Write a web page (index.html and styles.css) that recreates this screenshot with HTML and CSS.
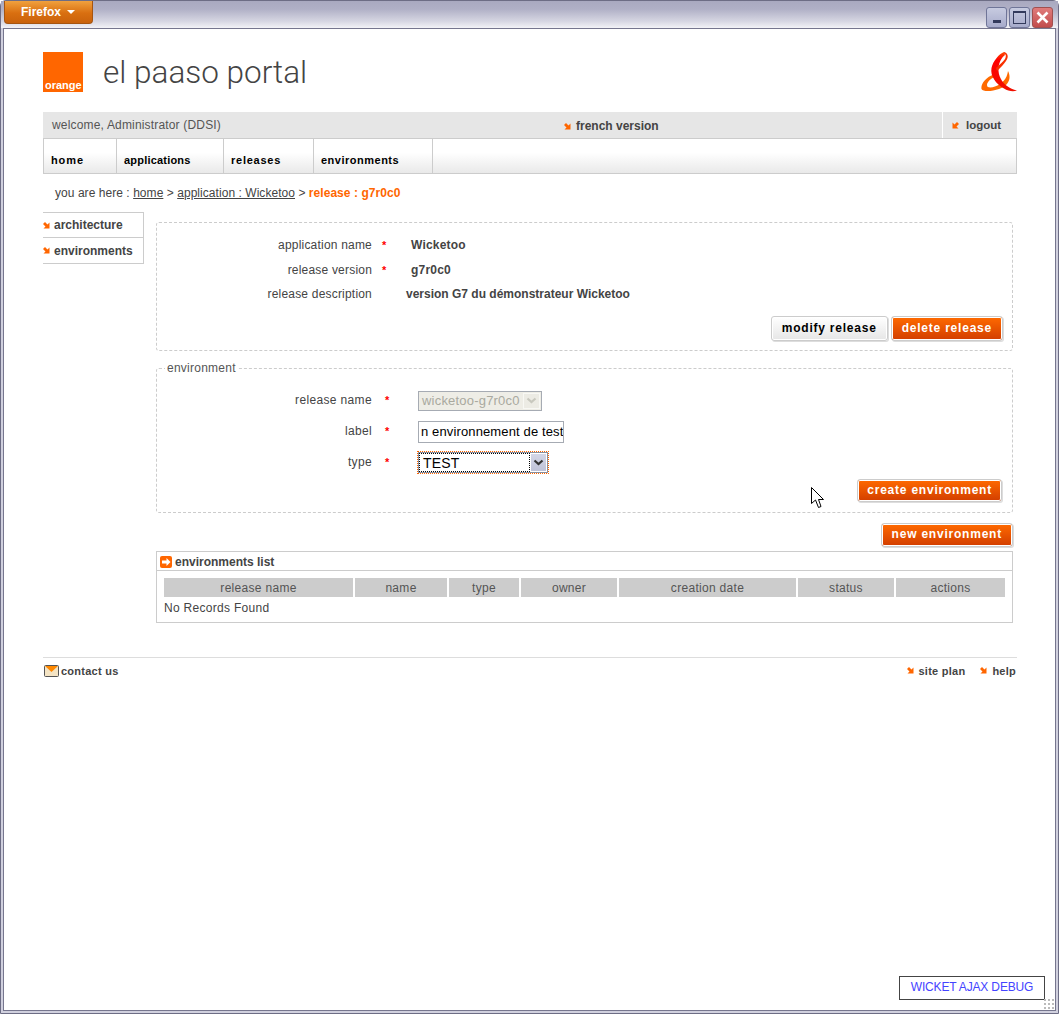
FILE: index.html
```html
<!doctype html>
<html>
<head>
<meta charset="utf-8">
<title>el paaso portal</title>
<link rel="stylesheet" href="styles.css">
</head>

<body>
<svg class="defs" width="0" height="0">
	<symbol id="arr" viewBox="0 0 7 7"><path d="M6.5 0.5V6.500H0.5L2.5 4.500 0 2 2 0 4.500 2.500Z" fill="#f60"/></symbol>
	<symbol id="arr2" viewBox="0 0 7 7"><path d="M0.5 0.5V6.500H6.500L4.500 4.500 7 2 5 0 2.500 2.500Z" fill="#f60"/></symbol>
</svg>
<div class="window">
	<div class="titlebar">
		<div class="ffbtn">Firefox <i class="ffarrow"></i></div>
		<div class="winbtns">
			<span class="winbtn"><i class="icmin"></i></span>
			<span class="winbtn"><i class="icmax"></i></span>
			<span class="winbtn close">
				<svg width="15" height="15" viewBox="0 0 15 15"><path d="M2.5 2.5 12.5 12.5M12.5 2.5 2.5 12.5" stroke="#fff" stroke-width="2.6" fill="none"/></svg>
			</span>
		</div>
	</div>
	<div class="content">
		<div class="header">
			<div class="logo"><span>orange</span></div>
			<div class="sitename">el paaso portal</div>
			<svg class="amp" width="36" height="40" viewBox="0 0 36 40">
				<defs>
					<linearGradient id="g1" x1="0" y1="0" x2="0" y2="1"><stop offset="0" stop-color="#ff5000"/><stop offset="0.2" stop-color="#f00"/><stop offset="1" stop-color="#f01000"/></linearGradient>
				</defs>
				<path d="M27 19C31 27 27 34 18 37 11 39.5 2 40 0.5 37-0.5 32 5 25 13 22.5L14 25C10 26 6 30 6 33 6 36 10 36 14 34.5 21 32 26 27 27 19Z" fill="#ff6a00"/>
				<path d="M23 0C18 2 12 9 10.5 16 9 24 15 32 23 36.5 27 39 32 40 36 38.5 32 37.5 29 36 26 34 21 30 17 24 17.5 16 18 10 21 5 24 3Z" fill="url(#g1)"/>
				<path d="M23 0C27 1 28 5 25 9 23 12 20 15 16 19L15 16C18 13 22 10 24 7 25.5 4 25 2 23 1.5Z" fill="#f83000"/>
			</svg>
		</div>

		<div class="topbar">
			<div class="welcome">welcome, Administrator (DDSI)</div>
			<a class="french"><svg class="arr"><use href="#arr"/></svg>french version</a>
			<a class="logout"><svg class="arr"><use href="#arr2"/></svg>logout</a>
		</div>
		<ul class="nav">
			<li class="n1">home</li>
			<li class="n2">applications</li>
			<li class="n3">releases</li>
			<li class="n4">environments</li>
		</ul>
		<div class="crumb">you are here : <a>home</a> &gt; <a>application : Wicketoo</a> &gt; <b>release : g7r0c0</b></div>

		<div class="columns">
			<ul class="side">
				<li><svg class="arr"><use href="#arr"/></svg>architecture</li>
				<li><svg class="arr"><use href="#arr"/></svg>environments</li>
			</ul>
			<div class="main">
				<div class="panel info">
					<div class="inforow"><label>application name</label><em>*</em><b class="v1">Wicketoo</b></div>
					<div class="inforow"><label>release version</label><em>*</em><b class="v1">g7r0c0</b></div>
					<div class="inforow"><label>release description</label><em></em><b class="v2">version G7 du démonstrateur Wicketoo</b></div>
					<div class="btnrow">
						<span class="btn white">modify release</span>
						<span class="btn">delete release</span>
					</div>
				</div>

				<fieldset class="panel envform">
					<legend>environment</legend>
					<div class="formrow"><label>release name</label><em>*</em>
						<div class="sel disabled">wicketoo-g7r0c0<span class="selarrow"><svg width="11" height="7" viewBox="0 0 11 7"><path d="M1.5 1.5 5.5 5 9.5 1.5" stroke="#c8c8be" stroke-width="2.2" fill="none"/></svg></span></div>
					</div>
					<div class="formrow"><label>label</label><em>*</em>
						<input class="txt" type="text" value="n environnement de test">
					</div>
					<div class="formrow"><label>type</label><em>*</em>
						<div class="sel focus"><span class="seltext">TEST</span><span class="selarrow"><svg width="11" height="7" viewBox="0 0 11 7"><path d="M1.5 1.5 5.5 5 9.5 1.5" stroke="#333" stroke-width="2.2" fill="none"/></svg></span></div>
					</div>
					<div class="btnrow create"><span class="btn">create environment</span></div>
				</fieldset>

				<div class="newrow"><span class="btn">new environment</span></div>

				<div class="listbox">
					<div class="listhead">
						<svg width="12" height="12" viewBox="0 0 12 12"><rect width="12" height="12" rx="2" fill="#f60"/><path d="M6.5 2 10.5 6 6.5 10V7.500H2V4.500H6.500Z" fill="#fff"/></svg>
						environments list
					</div>
					<table class="list">
						<tr>
							<th class="c1">release name</th>
							<th class="c2">name</th>
							<th class="c3">type</th>
							<th class="c4">owner</th>
							<th class="c5">creation date</th>
							<th class="c6">status</th>
							<th class="c7">actions</th>
						</tr>
						<tr><td colspan="7">No Records Found</td></tr>
					</table>
				</div>
			</div>
		</div>

		<div class="footer">
			<a class="contact">
				<svg width="15" height="12" viewBox="0 0 15 12"><rect x="0.5" y="0.5" width="14" height="11" rx="1" fill="#f4e4c4" stroke="#555"/><path d="M1 1H14L7.5 7Z" fill="#f80"/></svg>
				contact us
			</a>
			<a class="plan"><svg class="arr"><use href="#arr"/></svg>site plan</a>
			<a class="help"><svg class="arr"><use href="#arr"/></svg>help</a>
		</div>

		<svg class="cursor" width="13" height="22" viewBox="0 0 13 22"><path d="M0.5 0.5V16.500L4.500 13 7.500 20.500 10 19.500 7.500 12.500H12.500Z" fill="#fff" stroke="#000"/></svg>
		<div class="debug">WICKET AJAX DEBUG</div>
		<div class="grip"></div>
	</div>
</div>
</body>
</html>
```

FILE: styles.css
```css
*{ margin:0; padding:0; list-style:none; box-sizing:border-box;}
html,body{ height:100%; background:#fff;}
body{ font-family:"Liberation Sans",Arial,sans-serif; font-size:12px; color:#444; overflow:hidden;}
a{ color:inherit;}
.defs{ position:absolute;}
.arr{ width:7px; height:7px; margin-right:5px; flex:none;}

/* window frame */
.window{ width:1059px; height:1014px; display:flex; flex-direction:column; background:#d0d0de; padding:0 2px 2px; border-radius:6px 6px 0 0; border:1px solid #6d6d85;}
.titlebar{ height:27px; margin:0 -2px; padding:0 3px; flex:none; display:flex; justify-content:space-between; background:linear-gradient(#a9a9c0 0,#b0b0c6 30%,#d6d6e2 75%,#f3f3f7 100%);}
.ffbtn{ width:89px; height:23px; background:linear-gradient(#f0a13e,#d96f10 55%,#c9620c); border:1px solid #a65510; border-top:0; border-radius:0 0 4px 4px; color:#fff; font-weight:bold; font-size:12px; line-height:23px; padding-left:16px;}
.ffarrow{ display:inline-block; width:0; height:0; border:4px solid transparent; border-top:4px solid #fff; border-bottom:0; margin:0 0 2px 3px;}
.winbtns{ display:flex; gap:2px; padding:6px 2px 0 0;}
.winbtn{ width:21px; height:21px; border:1px solid #6f7598; border-radius:3px; background:linear-gradient(#c7cbe0,#a7abcb); display:flex; align-items:center; justify-content:center;}
.winbtn.close{ background:linear-gradient(#e07c7c,#c24c4c); border-color:#a05050;}
.icmin{ width:8px; height:3px; background:#333a5c; margin-top:7px;}
.icmax{ width:13px; height:13px; border:1px solid #333a5c; border-top-width:2px;}
.content{ flex:1; background:#fff; border:1px solid #76768e; padding:23px 38px 0 39px; position:relative; min-height:0;}

/* header */
.header{ display:flex; height:40px; align-items:center;}
.logo{ width:40px; height:40px; background:#f60; display:flex; align-items:flex-end; padding:0 0 1px 2px;}
.logo span{ color:#fff; font-size:11px; font-weight:bold;}
.sitename{ flex:1; margin-left:20px; padding-top:1px; font-family:Roboto,"Liberation Sans",sans-serif; font-weight:300; font-size:31.5px; color:#444; line-height:40px;}
.amp{ flex:none;}

/* top bar + nav */
.topbar{ margin-top:20px; height:26px; background:#e6e6e6; display:flex; align-items:center;}
.welcome{ width:521px; padding-left:9px; color:#555; letter-spacing:0.17px;}
.french{ width:378px; font-weight:bold; display:flex; align-items:center; padding-top:2px;}
.logout{ flex:1; height:26px; border-left:1px solid #fff; font-weight:bold; display:flex; align-items:center; padding-left:9px; font-size:11.5px;}
.logout .arr{ margin-right:7px;}
.nav{ height:36px; display:flex; border:1px solid #ccc; background:linear-gradient(#fff 40%,#e9e9e9); font-weight:bold; font-size:11px; color:#000;}
.nav li{ border-right:1px solid #ccc; padding:15px 0 0 7px; letter-spacing:0.5px;}
.n1{ width:73px; letter-spacing:0.9px !important;}
.n2{ width:107px; letter-spacing:0.2px !important;}
.n3{ width:90px; letter-spacing:0.75px !important;}
.n4{ width:119px;}
.crumb{ height:38px; padding:12px 0 0 12px; color:#444; letter-spacing:0.05px;}
.crumb a{ text-decoration:underline; color:#444;}
.crumb b{ color:#f60;}

/* columns */
.columns{ display:flex; gap:12px;}
.side{ width:101px; flex:none; border-right:1px solid #ccc; font-weight:bold; height:52px; border-top:1px solid #ccc;}
.side li{ height:25px; border-bottom:1px solid #ccc; display:flex; align-items:center;}
.side li:last-child{ height:26px;}
.side .arr{ margin-right:4px;}
.main{ width:861px; padding-top:10px;}

/* panels */
.panel{ border:1px dashed #ccc; border-radius:3px; width:857px;}
.info{ height:129px; padding-top:10px;}
.inforow{ display:flex; height:24.5px; align-items:center;}
.inforow label{ width:215px; text-align:right; letter-spacing:0.2px;}
.inforow em,.formrow em{ color:#f00; font-style:normal; font-weight:bold; font-size:11px;}
.inforow em{ width:39px; padding-left:10px;}
.v1{ letter-spacing:0.2px;}
.v2{ margin-left:-5px;}
.btnrow{ display:flex; justify-content:flex-end; gap:3px; padding:9px 9px 0 0;}
.btn{ height:25px; line-height:22px; padding:0 10px; font-weight:bold; letter-spacing:0.78px; color:#fff; border:1px solid #ccc; border-radius:3px; background:linear-gradient(#ff6a00,#d23e00); box-shadow:inset 0 0 0 1px #fff, 1px 1px 0 #ddd;}
.btn.white{ color:#000; background:linear-gradient(#fff,#e6e6e6);}
.envform{ height:151px; margin-top:11px;}
.envform legend{ margin-left:8px; padding:0 2px; line-height:13px; color:#555; letter-spacing:0.25px;}
.formrow{ display:flex; align-items:center; height:31px;}
.formrow label{ width:215px; text-align:right; letter-spacing:0.35px; padding-bottom:2px;}
.formrow em{ width:46px; padding:0 0 2px 13px;}
.envform .formrow:first-of-type{ margin-top:10px;}
.sel{ height:20px; border:1px solid #a6abb3; display:flex; align-items:center; justify-content:space-between; font-size:13px; letter-spacing:0.2px;}
.sel.disabled{ width:124px; background:#eeede6; color:#a9a99f; padding-left:3px;}
.sel.disabled .selarrow{ width:17px; height:16px; margin-right:1px; background:#ecebe4; border:1px solid #f8f8f4; display:flex; align-items:center; justify-content:center;}
.sel.focus{ width:130px; height:21px; background:#fff; color:#000; outline:1px dotted #f60; font-size:14px; border-color:#8890a0;}
.seltext{ flex:1; border:1px dotted #000; height:19px; line-height:18px; padding-left:3px; background:#fff;}
.sel.focus .selarrow{ width:17px; height:19px; background:linear-gradient(#d4d6e6,#bfc2d8); border:1px solid #fff; display:flex; align-items:center; justify-content:center;}
.txt{ width:146px; height:22px; border:1px solid #a6abb3; font:13px "Liberation Sans",Arial,sans-serif; letter-spacing:0.13px; padding:0 0 0 2px; color:#000; background:#fff; outline:none;}
.btnrow.create{ padding:1px 10px 0 0;}
.create .btn{ height:23px; line-height:20px; padding:0 9px;}
.newrow{ display:flex; justify-content:flex-end; width:857px; padding:10px 0 4px 0;}
.newrow .btn{ height:24px; line-height:21px;}

/* list */
.listbox{ border:1px solid #ccc; height:72px; width:857px;}
.listhead{ height:19px; border-bottom:1px solid #ccc; font-weight:bold; display:flex; align-items:center; gap:3px; padding:1px 0 0 3px;}
.list{ border-collapse:separate; border-spacing:2px; margin:5px 0 0 5px; table-layout:fixed; width:845px;}
.list th{ background:#ccc; font-weight:normal; height:19px; color:#555; letter-spacing:0.3px;}
.list td{ padding-top:2px; letter-spacing:0.3px;}
.c1{ width:189px;}
.c2{ width:92px;}
.c3{ width:70px;}
.c4{ width:96px;}
.c5{ width:177px;}
.c6{ width:96px;}
.c7{ width:109px;}

/* footer */
.footer{ display:flex; align-items:center; margin-top:34px; padding-right:1px; border-top:1px solid #ddd; height:26px; font-weight:bold; font-size:11px; letter-spacing:0.25px;}
.contact{ flex:1; display:flex; align-items:center; gap:2px; padding-left:1px;}
.plan,.help{ display:flex; align-items:center;}
.plan{ margin-right:15px;}

/* overlays */
.cursor{ position:absolute; left:807px; top:458px;}
.debug{ position:absolute; right:10px; bottom:10px; width:146px; height:24px; border:1px solid #444; background:#fff; color:#44f; text-align:center; line-height:21px; letter-spacing:-0.15px;}
.grip{ position:absolute; right:0; bottom:0; width:12px; height:12px; background:radial-gradient(circle,#bbb 1px,transparent 1.5px) 0 0/4px 4px;}
```
